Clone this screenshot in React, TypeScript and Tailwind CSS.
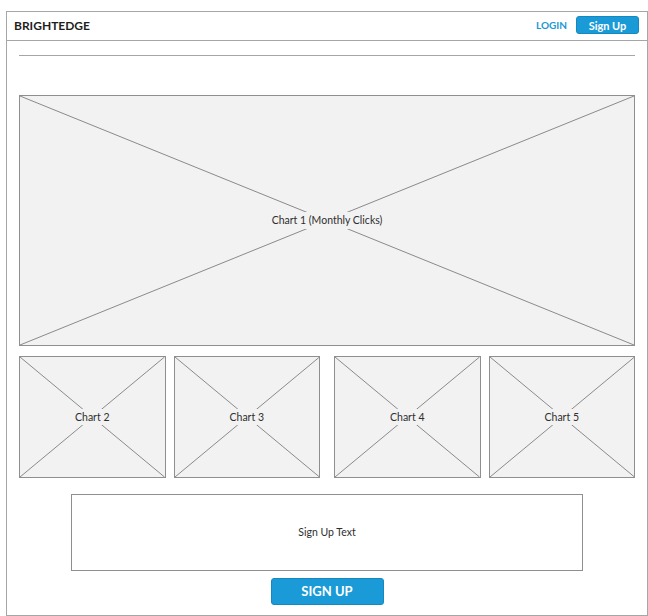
import React from "react";

const Placeholder: React.FC<{ label: string; className?: string }> = ({ label, className }) => {
  return (
    <div className={`relative flex items-center justify-center border border-[#8f8f8f] bg-[#f2f2f2] ${className ?? ""}`}>
      <svg className="absolute inset-0 h-full w-full" preserveAspectRatio="none" viewBox="0 0 100 100">
        <line x1="0" y1="0" x2="100" y2="100" stroke="#8a8a8a" strokeWidth="1" vectorEffect="non-scaling-stroke" />
        <line x1="100" y1="0" x2="0" y2="100" stroke="#8a8a8a" strokeWidth="1" vectorEffect="non-scaling-stroke" />
      </svg>
      <span className="relative bg-[#f2f2f2] px-[5px] py-[3px] text-[10.5px] leading-none text-[#2e2e2e]">{label}</span>
    </div>
  );
};

const App: React.FC = () => {
  return (
    <div className="h-[616px] w-[648px] bg-white pl-[6px] pt-[11px]" style={{ fontFamily: "Lato, 'Open Sans', sans-serif" }}>
      <div className="flex h-[605px] w-[642px] flex-col border border-[#a6a6a6]">
        <div className="flex h-[29px] items-center justify-between border-b border-[#a6a6a6] pl-[7px] pr-[8px]">
          <span className="text-[12px] font-bold text-[#1e1e1e]">BRIGHTEDGE</span>
          <div className="-mt-[2px] flex items-center gap-[9px]">
            <span className="text-[10px] font-bold text-[#1a97d4]">LOGIN</span>
            <button className="h-[18px] w-[63px] rounded-[3px] border border-[#1688c0] bg-[#1a9ad6] text-[11px] font-bold leading-none text-white">
              Sign Up
            </button>
          </div>
        </div>

        <div className="flex flex-col px-[12px] pt-[14px]">
          <div className="h-px w-[616px] bg-[#a6a6a6]" />

          <Placeholder label="Chart 1 (Monthly Clicks)" className="mt-[39px] h-[251px] w-[616px]" />

          <div className="mt-[10px] flex h-[122px] w-[616px] gap-[14px]">
            <div className="flex flex-1 gap-[8px]">
              <Placeholder label="Chart 2" className="flex-1" />
              <Placeholder label="Chart 3" className="flex-1" />
            </div>
            <div className="flex flex-1 gap-[8px]">
              <Placeholder label="Chart 4" className="flex-1" />
              <Placeholder label="Chart 5" className="flex-1" />
            </div>
          </div>

          <div className="mt-[16px] flex h-[77px] w-[512px] items-center justify-center self-center border border-[#8f8f8f] bg-white">
            <span className="text-[10.5px] text-[#2e2e2e]">Sign Up Text</span>
          </div>

          <button className="mt-[7px] h-[27px] w-[113px] self-center rounded-[3px] border border-[#1688c0] bg-[#1a9ad6] text-[13px] font-bold leading-none text-white">
            SIGN UP
          </button>
        </div>
      </div>
    </div>
  );
};

export default App;
